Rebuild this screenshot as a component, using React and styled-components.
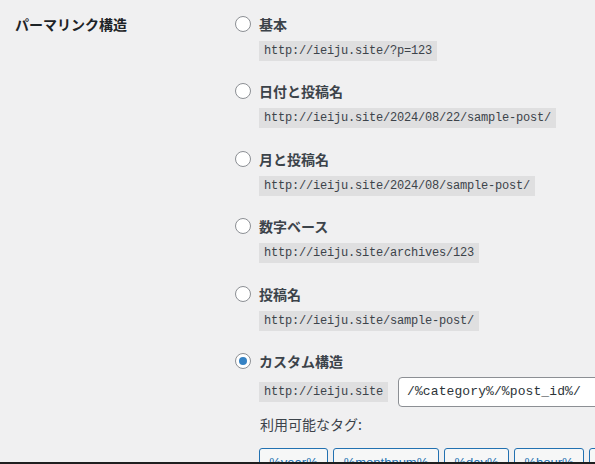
import React from "react";
import styled, { createGlobalStyle } from "styled-components";

const Global = createGlobalStyle`
  html, body {
    margin: 0;
    padding: 0;
    background: #f0f0f1;
    overflow: hidden;
    height: 100%;
  }
  body {
    font-family: "Noto Sans CJK JP", "Noto Sans", sans-serif;
    color: #3c434a;
  }
`;

const Page = styled.div`
  display: grid;
  grid-template-columns: 220px 1fr;
  padding: 13px 0 0 15px;
  width: 800px;
`;

const Heading = styled.div`
  font-size: 14px;
  font-weight: 700;
  color: #1d2327;
  line-height: 22px;
  height: 22px;
`;

const Options = styled.div`
  display: flex;
  flex-direction: column;
  gap: 19.4px;
`;

const Option = styled.div`
  display: flex;
  flex-direction: column;
  align-items: flex-start;
`;

const LabelRow = styled.label`
  display: flex;
  align-items: center;
  gap: 8px;
  height: 22px;
  font-size: 14px;
  font-weight: 700;
  color: #3c434a;
`;

const Radio = styled.input.attrs({ type: "radio" })`
  appearance: none;
  margin: 0;
  width: 16px;
  height: 16px;
  border-radius: 50%;
  border: 1px solid #8c8f94;
  background: #fff;
  box-sizing: border-box;
  position: relative;
  flex: none;
  &:checked::before {
    content: "";
    position: absolute;
    left: 3px;
    top: 3px;
    width: 8px;
    height: 8px;
    border-radius: 50%;
    background: #3582c4;
  }
`;

const Code = styled.code`
  display: inline-block;
  margin-top: ${(p) => (p.$inline ? "0" : "6px")};
  margin-left: ${(p) => (p.$inline ? "0" : "24px")};
  padding: 0 5px;
  height: 20px;
  line-height: 20px;
  background: rgba(0, 0, 0, 0.07);
  font-family: "Liberation Mono", "DejaVu Sans Mono", monospace;
  font-size: 12px;
  letter-spacing: -0.2px;
  color: #3c434a;
  white-space: nowrap;
`;

const CustomRow = styled.div`
  display: flex;
  align-items: center;
  gap: 10px;
  margin: 5px 0 0 24px;
`;

const Input = styled.input`
  box-sizing: border-box;
  width: 420px;
  height: 30px;
  margin: 0;
  padding: 0 8px;
  border: 1px solid #8c8f94;
  border-radius: 4px;
  background: #fff;
  font-family: "Liberation Mono", "DejaVu Sans Mono", monospace;
  font-size: 13px;
  letter-spacing: 0.1px;
  color: #2c3338;
  outline: none;
`;

const TagsLabel = styled.div`
  margin: 7px 0 0 25px;
  font-size: 14px;
  line-height: 20px;
  color: #3c434a;
`;

const Tags = styled.div`
  display: flex;
  gap: 5px;
  margin: 14px 0 0 24px;
  flex-wrap: nowrap;
`;

const TagButton = styled.button`
  box-sizing: border-box;
  width: ${(p) => p.$w}px;
  height: 30px;
  padding: 0;
  border: 1px solid #2271b1;
  border-radius: 3px;
  background: #f6f7f7;
  color: #2271b1;
  font-family: "Liberation Sans", "Noto Sans", sans-serif;
  font-size: 13px;
  white-space: nowrap;
  overflow: hidden;
  flex: none;
`;

const BottomBar = styled.div`
  position: fixed;
  left: 0;
  right: 0;
  bottom: 0;
  height: 2px;
  background: #1f1f1f;
`;

const options = [
  { label: "基本", url: "http://ieiju.site/?p=123" },
  { label: "日付と投稿名", url: "http://ieiju.site/2024/08/22/sample-post/" },
  { label: "月と投稿名", url: "http://ieiju.site/2024/08/sample-post/" },
  { label: "数字ベース", url: "http://ieiju.site/archives/123" },
  { label: "投稿名", url: "http://ieiju.site/sample-post/" },
];

const tags = [
  { t: "%year%", w: 69 },
  { t: "%monthnum%", w: 106 },
  { t: "%day%", w: 65 },
  { t: "%hour%", w: 70 },
  { t: "%minute%", w: 80 },
];

export default function App() {
  return (
    <>
      <Global />
      <Page>
        <Heading>パーマリンク構造</Heading>
        <Options>
          {options.map((o) => (
            <Option key={o.label}>
              <LabelRow>
                <Radio name="perm" />
                {o.label}
              </LabelRow>
              <Code>{o.url}</Code>
            </Option>
          ))}
          <Option>
            <LabelRow>
              <Radio name="perm" defaultChecked />
              カスタム構造
            </LabelRow>
            <CustomRow>
              <Code $inline>http://ieiju.site</Code>
              <Input defaultValue="/%category%/%post_id%/" />
            </CustomRow>
            <TagsLabel>利用可能なタグ:</TagsLabel>
            <Tags>
              {tags.map((t) => (
                <TagButton key={t.t} $w={t.w}>
                  {t.t}
                </TagButton>
              ))}
            </Tags>
          </Option>
        </Options>
      </Page>
      <BottomBar />
    </>
  );
}
